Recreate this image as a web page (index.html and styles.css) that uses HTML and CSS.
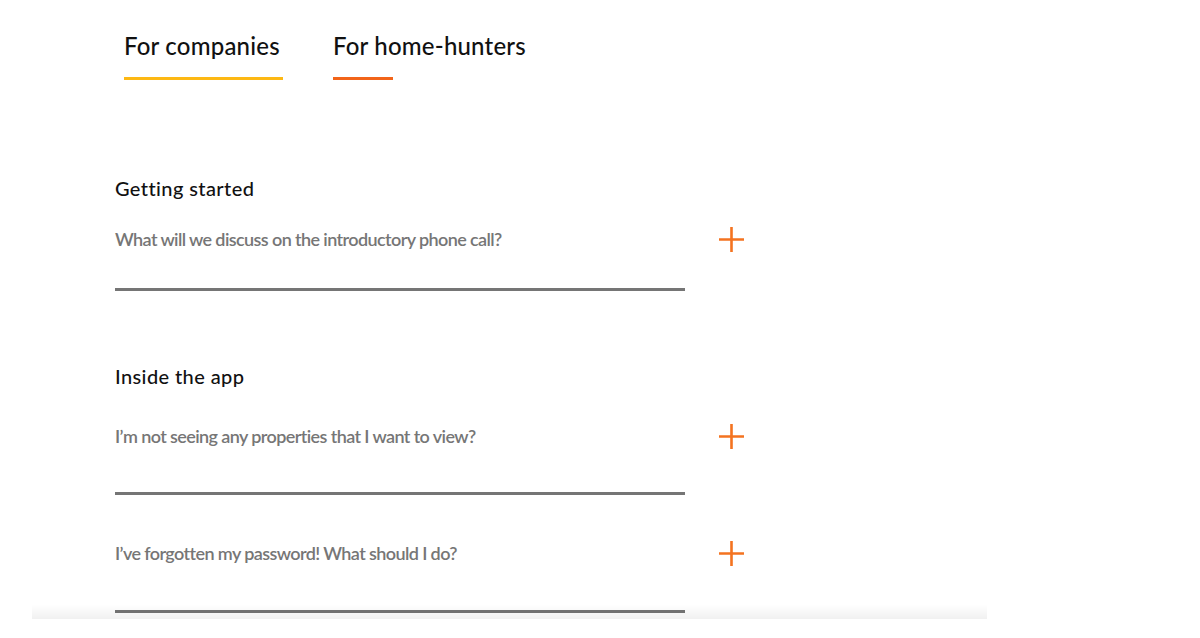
FILE: index.html
```html
<!DOCTYPE html>
<html lang="en">
<head>
<meta charset="utf-8">
<title>FAQ</title>
<link rel="stylesheet" href="styles.css">
</head>
<body>
<main class="page">
  <nav class="tabs">
    <a class="tab tab--companies">For companies</a>
    <a class="tab tab--hunters">For home-hunters</a>
  </nav>

  <section class="faq-section faq-section--first">
    <h2 class="faq-heading">Getting started</h2>
    <div class="faq-item faq-item--first">
      <div class="faq-question">What will we discuss on the introductory phone call?</div>
      <svg class="faq-plus" width="25" height="25" viewBox="0 0 25 25" aria-hidden="true"><path d="M12.5 0V25M0 12.5H25" stroke="#f47320" stroke-width="2.6"/></svg>
    </div>
  </section>

  <section class="faq-section faq-section--second">
    <h2 class="faq-heading">Inside the app</h2>
    <div class="faq-item faq-item--second">
      <div class="faq-question">I’m not seeing any properties that I want to view?</div>
      <svg class="faq-plus" width="25" height="25" viewBox="0 0 25 25" aria-hidden="true"><path d="M12.5 0V25M0 12.5H25" stroke="#f47320" stroke-width="2.6"/></svg>
    </div>
    <div class="faq-item faq-item--third">
      <div class="faq-question">I’ve forgotten my password! What should I do?</div>
      <svg class="faq-plus" width="25" height="25" viewBox="0 0 25 25" aria-hidden="true"><path d="M12.5 0V25M0 12.5H25" stroke="#f47320" stroke-width="2.6"/></svg>
    </div>
  </section>
</main>
<div class="bottom-fade"></div>
</body>
</html>
```

FILE: styles.css
```css
html, body {
  margin: 0;
  padding: 0;
  background: #ffffff;
}

body {
  font-family: "Lato", "Open Sans", sans-serif;
  color: #111111;
  overflow: hidden;
}

.page {
  padding-left: 115px;
}

.tabs {
  display: flex;
  align-items: flex-start;
  gap: 50px;
  padding-top: 31px;
  margin-left: 9px;
}

.tab {
  display: block;
  position: relative;
  font-size: 24px;
  line-height: 30px;
  font-weight: 500;
  color: #111111;
  padding-bottom: 16px;
  border-bottom: 3px solid transparent;
  letter-spacing: 0.2px;
}

.tab--companies {
  width: 159px;
  border-bottom-color: #fdb813;
}

.tab--hunters::after {
  content: "";
  position: absolute;
  left: 0;
  bottom: -3px;
  width: 60px;
  height: 3px;
  background: #f26419;
}

.faq-heading {
  margin: 0;
  font-size: 20px;
  line-height: 24px;
  font-weight: 500;
  color: #111111;
  letter-spacing: 0.4px;
}

.faq-section--first {
  margin-top: 96px;
}

.faq-section--second {
  margin-top: 73px;
}

.faq-item {
  display: flex;
  align-items: flex-start;
}

.faq-question {
  width: 570px;
  box-sizing: border-box;
  font-size: 18px;
  line-height: 22px;
  font-weight: 600;
  color: #767676;
  letter-spacing: -0.6px;
  border-bottom: 3px solid #757575;
}

.faq-plus {
  display: block;
  margin-left: 34px;
  margin-top: -1px;
}

.faq-item--first {
  margin-top: 28px;
}

.faq-item--first .faq-question {
  padding-bottom: 38px;
}

.faq-item--second {
  margin-top: 37px;
}

.faq-item--second .faq-question {
  padding-bottom: 45px;
}

.faq-item--third {
  margin-top: 47px;
}

.faq-item--third .faq-question {
  padding-bottom: 46px;
}

.bottom-fade {
  position: fixed;
  left: 32px;
  width: 955px;
  bottom: 19px;
  height: 14px;
  background: linear-gradient(to bottom, rgba(0, 0, 0, 0), rgba(0, 0, 0, 0.06));
  pointer-events: none;
}
```
